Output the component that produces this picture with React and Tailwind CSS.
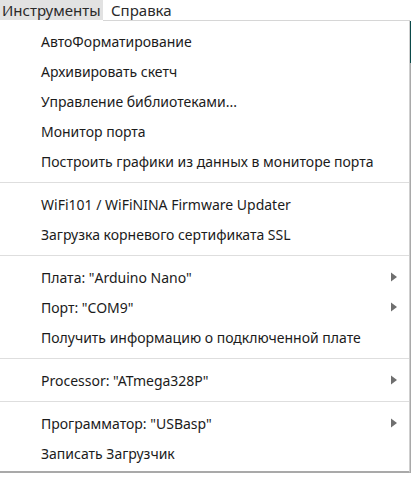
import React from 'react';

const GROUPS = [
  [
    { label: 'АвтоФорматирование' },
    { label: 'Архивировать скетч' },
    { label: 'Управление библиотеками...' },
    { label: 'Монитор порта' },
    { label: 'Построить графики из данных в мониторе порта' },
  ],
  [
    { label: 'WiFi101 / WiFiNINA Firmware Updater' },
    { label: 'Загрузка корневого сертификата SSL' },
  ],
  [
    { label: 'Плата: "Arduino Nano"', sub: true },
    { label: 'Порт: "COM9"', sub: true },
    { label: 'Получить информацию о подключенной плате' },
  ],
  [{ label: 'Processor: "ATmega328P"', sub: true }],
  [
    { label: 'Программатор: "USBasp"', sub: true },
    { label: 'Записать Загрузчик' },
  ],
];

const Arrow = () => (
  <svg width="6" height="10" viewBox="0 0 6 10" className="shrink-0">
    <polygon points="0,0.5 6,5 0,9.5" fill="#6f6f6f" />
  </svg>
);

const Item = ({ label, sub }) => (
  <div className="h-[30px] flex items-center pl-[41px] pr-[12px]">
    <span className="flex-1 whitespace-nowrap">{label}</span>
    {sub && <Arrow />}
  </div>
);

const Separator = () => (
  <div className="py-[6px]">
    <div className="h-px bg-[#dedede]" />
  </div>
);

export default function App() {
  return (
    <div
      className="w-[411px] h-[477px] bg-white overflow-hidden text-[#1b1b1b]"
      style={{ fontFamily: '"Noto Sans", "Open Sans", sans-serif' }}
    >
      {/* menubar */}
      <div className="flex h-[20px] text-[15px] leading-[20px]">
        <div className="w-[103px] bg-[#e2e2e2] pl-[2px] text-[#2a2a2a]">Инструменты</div>
        <div className="pl-[8px] text-[#2a2a2a]">Справка</div>
      </div>

      {/* dropdown */}
      <div className="flex w-[411px]">
        <div className="w-[410px] border-r border-[#cfcfcf] border-b-2 border-b-[#a9a9a9]">
          <div className="flex">
            <div className="w-[103px]" />
            <div className="flex-1 h-px bg-[#d6d6d6]" />
          </div>
          <div className="pt-[5px] pb-[3px] text-[14px]">
            {GROUPS.map((g, gi) => (
              <div key={gi}>
                {gi > 0 && <Separator />}
                {g.map(it => <Item key={it.label} {...it} />)}
              </div>
            ))}
          </div>
        </div>
        <div className="w-px flex flex-col">
          <div className="h-px" />
          <div className="h-[42px] bg-[#0b4a4a]" />
          <div className="flex-1 bg-[#a9a9a9]" />
        </div>
      </div>
    </div>
  );
}
